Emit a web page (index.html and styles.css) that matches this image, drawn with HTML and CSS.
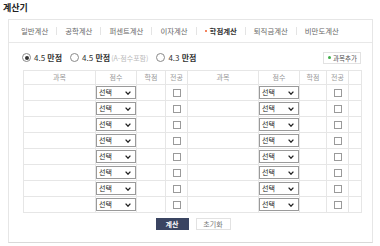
FILE: index.html
```html
<!DOCTYPE html>
<html lang="ko">
<head>
<meta charset="utf-8">
<title>계산기</title>
<link rel="stylesheet" href="styles.css">
</head>
<body>
<h1 class="title">계산기</h1>
<div class="box">
  <div class="tabs">
    <span class="tab first">일반계산</span>
    <span class="tab">공학계산</span>
    <span class="tab">퍼센트계산</span>
    <span class="tab">이자계산</span>
    <span class="tab active"><i class="dot"></i>학점계산</span>
    <span class="tab">퇴직금계산</span>
    <span class="tab">비만도계산</span>
  </div>
  <div class="content">
    <div class="opts">
      <span class="radio checked"></span><span class="opt">4.5 <b>만점</b></span>
      <span class="radio"></span><span class="opt">4.5 <b>만점</b><span class="note">(A-점수포함)</span></span>
      <span class="radio"></span><span class="opt">4.3 <b>만점</b></span>
      <span class="add"><i class="gdot"></i>과목추가</span>
    </div>
    <table class="grid">
      <colgroup>
        <col class="c-subj"><col class="c-score"><col class="c-cred"><col class="c-maj">
        <col class="c-subj2"><col class="c-score"><col class="c-cred2"><col class="c-maj">
        <col class="c-blank">
      </colgroup>
      <tr class="head">
        <th>과목</th><th>점수</th><th>학점</th><th>전공</th>
        <th>과목</th><th>점수</th><th>학점</th><th>전공</th><th></th>
      </tr>
      <tr><td></td><td class="sc"><div class="sel"><span>선택</span><svg width="6" height="4" viewBox="0 0 6 4"><path d="M0.6 0.6 L3 3.2 L5.4 0.6" fill="none" stroke="#222" stroke-width="1.3"/></svg></div></td><td></td><td class="mj"><span class="cb"></span></td><td></td><td class="sc"><div class="sel"><span>선택</span><svg width="6" height="4" viewBox="0 0 6 4"><path d="M0.6 0.6 L3 3.2 L5.4 0.6" fill="none" stroke="#222" stroke-width="1.3"/></svg></div></td><td></td><td class="mj"><span class="cb"></span></td><td></td></tr>
      <tr><td></td><td class="sc"><div class="sel"><span>선택</span><svg width="6" height="4" viewBox="0 0 6 4"><path d="M0.6 0.6 L3 3.2 L5.4 0.6" fill="none" stroke="#222" stroke-width="1.3"/></svg></div></td><td></td><td class="mj"><span class="cb"></span></td><td></td><td class="sc"><div class="sel"><span>선택</span><svg width="6" height="4" viewBox="0 0 6 4"><path d="M0.6 0.6 L3 3.2 L5.4 0.6" fill="none" stroke="#222" stroke-width="1.3"/></svg></div></td><td></td><td class="mj"><span class="cb"></span></td><td></td></tr>
      <tr><td></td><td class="sc"><div class="sel"><span>선택</span><svg width="6" height="4" viewBox="0 0 6 4"><path d="M0.6 0.6 L3 3.2 L5.4 0.6" fill="none" stroke="#222" stroke-width="1.3"/></svg></div></td><td></td><td class="mj"><span class="cb"></span></td><td></td><td class="sc"><div class="sel"><span>선택</span><svg width="6" height="4" viewBox="0 0 6 4"><path d="M0.6 0.6 L3 3.2 L5.4 0.6" fill="none" stroke="#222" stroke-width="1.3"/></svg></div></td><td></td><td class="mj"><span class="cb"></span></td><td></td></tr>
      <tr><td></td><td class="sc"><div class="sel"><span>선택</span><svg width="6" height="4" viewBox="0 0 6 4"><path d="M0.6 0.6 L3 3.2 L5.4 0.6" fill="none" stroke="#222" stroke-width="1.3"/></svg></div></td><td></td><td class="mj"><span class="cb"></span></td><td></td><td class="sc"><div class="sel"><span>선택</span><svg width="6" height="4" viewBox="0 0 6 4"><path d="M0.6 0.6 L3 3.2 L5.4 0.6" fill="none" stroke="#222" stroke-width="1.3"/></svg></div></td><td></td><td class="mj"><span class="cb"></span></td><td></td></tr>
      <tr><td></td><td class="sc"><div class="sel"><span>선택</span><svg width="6" height="4" viewBox="0 0 6 4"><path d="M0.6 0.6 L3 3.2 L5.4 0.6" fill="none" stroke="#222" stroke-width="1.3"/></svg></div></td><td></td><td class="mj"><span class="cb"></span></td><td></td><td class="sc"><div class="sel"><span>선택</span><svg width="6" height="4" viewBox="0 0 6 4"><path d="M0.6 0.6 L3 3.2 L5.4 0.6" fill="none" stroke="#222" stroke-width="1.3"/></svg></div></td><td></td><td class="mj"><span class="cb"></span></td><td></td></tr>
      <tr><td></td><td class="sc"><div class="sel"><span>선택</span><svg width="6" height="4" viewBox="0 0 6 4"><path d="M0.6 0.6 L3 3.2 L5.4 0.6" fill="none" stroke="#222" stroke-width="1.3"/></svg></div></td><td></td><td class="mj"><span class="cb"></span></td><td></td><td class="sc"><div class="sel"><span>선택</span><svg width="6" height="4" viewBox="0 0 6 4"><path d="M0.6 0.6 L3 3.2 L5.4 0.6" fill="none" stroke="#222" stroke-width="1.3"/></svg></div></td><td></td><td class="mj"><span class="cb"></span></td><td></td></tr>
      <tr><td></td><td class="sc"><div class="sel"><span>선택</span><svg width="6" height="4" viewBox="0 0 6 4"><path d="M0.6 0.6 L3 3.2 L5.4 0.6" fill="none" stroke="#222" stroke-width="1.3"/></svg></div></td><td></td><td class="mj"><span class="cb"></span></td><td></td><td class="sc"><div class="sel"><span>선택</span><svg width="6" height="4" viewBox="0 0 6 4"><path d="M0.6 0.6 L3 3.2 L5.4 0.6" fill="none" stroke="#222" stroke-width="1.3"/></svg></div></td><td></td><td class="mj"><span class="cb"></span></td><td></td></tr>
      <tr><td></td><td class="sc"><div class="sel"><span>선택</span><svg width="6" height="4" viewBox="0 0 6 4"><path d="M0.6 0.6 L3 3.2 L5.4 0.6" fill="none" stroke="#222" stroke-width="1.3"/></svg></div></td><td></td><td class="mj"><span class="cb"></span></td><td></td><td class="sc"><div class="sel"><span>선택</span><svg width="6" height="4" viewBox="0 0 6 4"><path d="M0.6 0.6 L3 3.2 L5.4 0.6" fill="none" stroke="#222" stroke-width="1.3"/></svg></div></td><td></td><td class="mj"><span class="cb"></span></td><td></td></tr>
    </table>
    <div class="btns">
      <span class="btn primary">계산</span>
      <span class="btn">초기화</span>
    </div>
  </div>
</div>
</body>
</html>
```
FILE: styles.css
```css
* { box-sizing: border-box; }
html, body { margin: 0; padding: 0; background: #fff; }
body {
  padding: 2px 3px;
  font-family: "Noto Sans CJK KR", "Noto Sans", sans-serif;
  color: #555;
}
.title {
  margin: 0;
  font-size: 9px;
  line-height: 12px;
  font-weight: 700;
  color: #222;
}
.box {
  margin: 5px 0 0 5px;
  width: 365px;
  border: 1px solid #e6e6e6;
  border-bottom-color: #d9d9d9;
}
.tabs {
  display: flex;
  align-items: center;
  height: 23px;
  padding-left: 12px;
  border-bottom: 1px solid #e8e8e8;
}
.tab {
  font-size: 7.4px;
  line-height: 8px;
  color: #666;
  padding: 0 8px;
  border-left: 1px solid #e4e4e4;
  display: flex;
  align-items: center;
  white-space: nowrap;
}
.tab.first { padding-left: 0; border-left: none; }
.tab.active { color: #333; font-weight: 700; }
.dot {
  display: inline-block;
  width: 2px;
  height: 2px;
  border-radius: 50%;
  background: #f05a28;
  margin-right: 3px;
}
.content { padding: 0 11px 12px 14px; }
.opts {
  display: flex;
  align-items: center;
  height: 15px;
  margin-top: 7px;
}
.radio {
  width: 9px;
  height: 9px;
  border: 1px solid #8a8a8a;
  border-radius: 50%;
  margin-left: -1px;
  display: flex;
  align-items: center;
  justify-content: center;
  background: #fff;
}
.radio + .opt { margin-left: 3px; margin-right: 9px; }
.radio.checked::after {
  content: "";
  width: 4px;
  height: 4px;
  border-radius: 50%;
  background: #333;
}
.opt { font-size: 8px; color: #333; white-space: nowrap; }
.opt b { font-weight: 700; }
.note { font-size: 7px; color: #bbb; margin-left: 1px; }
.add {
  margin-left: auto;
  height: 12px;
  padding: 0 3px 0 4px;
  border: 1px solid #e2e2e2;
  background: #fff;
  font-size: 6.5px;
  color: #555;
  display: flex;
  align-items: center;
  white-space: nowrap;
}
.gdot {
  display: inline-block;
  width: 3px;
  height: 3px;
  border-radius: 50%;
  background: #3fae49;
  margin-right: 2px;
}
.grid {
  margin-top: 5px;
  width: 338px;
  border-collapse: collapse;
  table-layout: fixed;
  font-size: 7px;
  line-height: 1;
}
.c-subj { width: 72px; }
.c-score { width: 41px; }
.c-cred { width: 29px; }
.c-maj { width: 22px; }
.c-subj2 { width: 71px; }
.c-cred2 { width: 27px; }
.c-blank { width: 13px; }
.grid th, .grid td {
  border: 1px solid #e6e6e6;
  padding: 0;
}
.grid th {
  height: 14px;
  font-size: 7px;
  font-weight: 400;
  color: #999;
  text-align: center;
  vertical-align: middle;
}
.grid td { height: 16px; vertical-align: middle; }
.sc { padding: 0 0 0 1px; }
.sel {
  height: 13px;
  width: 40px;
  border: 1px solid #9a9a9a;
  background: #fff;
  display: flex;
  align-items: center;
  justify-content: space-between;
  padding: 0 4px 0 2px;
  font-size: 7px;
  line-height: 1;
  color: #222;
}
.mj { text-align: center; line-height: 0; font-size: 0; }
.cb {
  display: inline-block;
  width: 8px;
  height: 8px;
  border: 1px solid #9a9a9a;
  background: #fff;
  vertical-align: middle;
}
.btns {
  display: flex;
  justify-content: center;
  gap: 7px;
  margin-top: 5px;
  padding-left: 2px;
}
.btn {
  height: 12px;
  width: 35px;
  border: 1px solid #e2e2e2;
  background: #fff;
  font-size: 7px;
  color: #777;
  display: flex;
  align-items: center;
  justify-content: center;
}
.btn.primary {
  width: 33px;
  background: #3a4461;
  border-color: #3a4461;
  color: #fff;
  font-weight: 700;
}
```
